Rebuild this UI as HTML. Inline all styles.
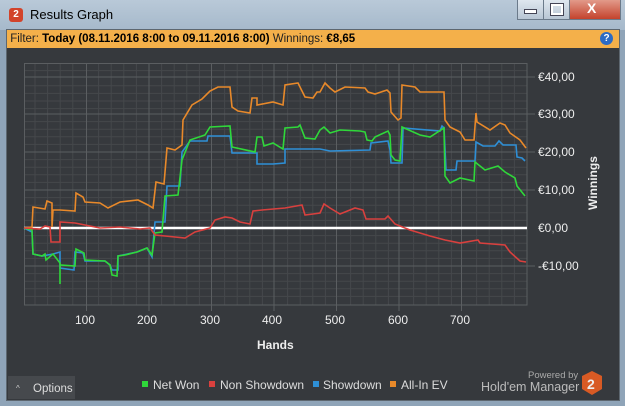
<!DOCTYPE html>
<html><head><style>
body{margin:0;width:625px;height:406px;overflow:hidden;background:#8fa4b8;font-family:"Liberation Sans",sans-serif;position:relative}
.tb{position:absolute;left:0;top:0;width:625px;height:30px;background:linear-gradient(#b9c9d8,#a6b9cb)}
.title{position:absolute;left:30px;top:7px;font-size:13px;color:#000}
.logo{position:absolute;left:9px;top:8px;width:14px;height:14px;background:#d2432a;border-radius:3px;color:#fff;font-size:10px;font-weight:bold;text-align:center;line-height:14px}
.btn{position:absolute;top:0;height:19px;border:1px solid #6b7a8a;border-top:none;background:linear-gradient(#dfe7ef,#b8c6d4)}
.main{position:absolute;left:6px;top:29px;width:612px;height:370px;background:#36393d;border:1px solid #5d6770}
.filter{position:absolute;left:0;top:0;width:612px;height:18px;background:#f4b04a;font-size:11.5px;line-height:18px;color:#222}
.filter b{color:#000}
.help{position:absolute;right:6px;top:2px;width:13px;height:13px;border-radius:50%;background:#2d6bc4;color:#fff;font-size:10px;font-weight:bold;text-align:center;line-height:13px}
</style></head><body>
<div class="tb"></div>
<div class="logo">2</div>
<div class="title">Results Graph</div>
<div class="btn" style="left:517px;width:25px"></div>
<div class="btn" style="left:543px;width:25px"></div>
<div class="btn" style="left:569px;width:50px;background:linear-gradient(#e29a8a,#c4432d)"></div>
<div style="position:absolute;left:524px;top:9px;width:11px;height:3px;background:#fff;border:1px solid #445"></div>
<div style="position:absolute;left:551px;top:4px;width:8px;height:7px;border:2px solid #fff;outline:1px solid #445"></div>
<div style="position:absolute;left:587px;top:0px;color:#fff;font-weight:bold;font-size:14px">X</div>
<div class="main">
<div class="filter">&nbsp;Filter: <b>Today (08.11.2016 8:00 to 09.11.2016 8:00)</b> Winnings: <b>€8,65</b><div class="help">?</div></div>
</div>
<svg style="position:absolute;left:0;top:0" width="625" height="406">
<g stroke="#45484b" stroke-width="1">
<path d="M24 70.6H527M24 85.8H527M24 93.4H527M24 101H527M24 108.6H527M24 121.6H527M24 129.2H527M24 136.8H527M24 144.4H527M24 159.6H527M24 167.2H527M24 174.8H527M24 182.4H527M24 197.6H527M24 205.2H527M24 212.8H527M24 220.4H527M24 235.6H527M24 243.2H527M24 250.8H527M24 258.4H527M24 273.6H527M24 281.2H527M24 288.8H527M24 296.4H527"/>
<path d="M35 63V305M47.6 63V305M60.2 63V305M72.8 63V305M98.6 63V305M111.2 63V305M123.8 63V305M136.4 63V305M161.6 63V305M174.2 63V305M186.8 63V305M199.4 63V305M224.6 63V305M237.2 63V305M249.8 63V305M262.4 63V305M287.6 63V305M300.2 63V305M312.8 63V305M325.4 63V305M350.6 63V305M363.2 63V305M375.8 63V305M388.4 63V305M413.6 63V305M426.2 63V305M438.8 63V305M451.4 63V305M476.6 63V305M489.2 63V305M501.8 63V305M514.4 63V305"/>
</g>
<g stroke="#5b5e61" stroke-width="1">
<rect x="24.5" y="63.5" width="502.5" height="241.5" fill="none"/>
<path d="M24 77H535M24 114H535M24 152H535M24 190H535M24 266H535M86.5 63V311M149 63V311M211.5 63V311M274 63V311M336.5 63V311M399 63V311M461.5 63V311"/>
</g>
<line x1="24" y1="228" x2="527" y2="228" stroke="#fff" stroke-width="2.5"/>
<g fill="none" stroke-width="1.6">
<polyline stroke="#e8892a" points="24,228 32,227 33,207 45,209 47,201 52,203 52,227 53,210 60,210 75,211 76,193 83,197 85,202 100,203 108,208 120,202 138,200 148,205 153,208 156,182 164,184 167,148 175,150 182,145 183,120 192,105 202,99 210,91 218,87 230,87 232,107 238,111 250,113 252,98 257,98 257,105 273,102 283,105 285,85 298,83 305,97 313,98 317,92 320,92 325,83 330,88 335,92 345,87 365,88 368,92 375,94 387,90 390,93 391,112 398,120 401,118 402,85 415,87 420,92 444,92 445,120 450,127 460,132 465,140 474,140 476,113 477,122 490,130 500,123 505,125 510,133 520,140 526,148"/>
<polyline stroke="#2e8fd6" points="24,228 32,232 33,254 42,256 53,254 60,252 60,268 74,270 75,252 83,253 85,261 105,261 110,265 112,270 118,270 118,256 137,252 147,248 152,257 155,222 165,222 167,186 180,186 182,152 190,141 207,141 208,136 230,136 232,153 257,153 257,164 273,164 285,163 285,149 320,149 330,151 370,150 371,143 388,141 390,150 391,163 402,163 403,128 440,131 442,126 444,128 446,170 456,170 457,161 475,161 476,142 483,146 495,146 499,141 503,145 516,145 517,157 522,158 525,161"/>
<polyline stroke="#2fd83a" points="24,228 32,230 33,254 42,256 45,254 46,260 53,254 60,263 60,284 60,265 75,266 76,249 84,253 85,260 105,261 110,265 112,275 117,276 118,256 125,255 137,252 147,248 152,255 155,233 162,232 165,196 178,195 182,160 190,140 205,135 210,127 230,126 232,147 255,152 257,137 262,137 264,146 273,143 283,149 285,128 298,127 300,125 305,138 315,139 320,130 324,127 330,133 340,130 360,131 365,132 367,140 372,141 375,137 388,131 390,135 391,155 395,160 400,161 402,127 420,135 430,137 444,128 445,176 450,183 460,178 474,181 475,162 485,170 498,166 505,172 515,178 517,186 525,196"/>
<polyline stroke="#d9403e" points="24,228 40,229 45,226 50,227 51,242 60,242 60,222 75,223 90,226 100,228 120,227 140,229 150,228 155,235 175,237 185,238 195,232 210,228 215,220 225,217 232,218 240,222 250,224 253,211 262,210 285,208 302,205 305,215 313,214 320,213 324,204 330,208 340,214 355,208 363,210 366,219 385,219 388,216 395,224 410,230 430,236 445,240 460,243 478,240 480,243 505,245 510,252 520,261 526,262"/>
</g>
<g fill="#eee" font-size="12" font-family="Liberation Sans,sans-serif">
<text x="538" y="81">€40,00</text><text x="538" y="118">€30,00</text><text x="538" y="156">€20,00</text><text x="538" y="194">€10,00</text><text x="538" y="232">€0,00</text><text x="538" y="270">-€10,00</text>
<text x="75" y="324">100</text><text x="137" y="324">200</text><text x="200" y="324">300</text><text x="262" y="324">400</text><text x="325" y="324">500</text><text x="388" y="324">600</text><text x="450" y="324">700</text>
<text x="257" y="349" font-weight="bold">Hands</text>
<text transform="translate(597,210) rotate(-90)" font-weight="bold">Winnings</text>
</g>
<rect x="8" y="376" width="67" height="23" fill="#46494d"/>
<text x="16" y="391" fill="#ccc" font-size="8" font-family="Liberation Sans">^</text>
<text x="33" y="392" fill="#ddd" font-size="11.5" font-family="Liberation Sans">Options</text>
<g font-size="12" font-family="Liberation Sans" fill="#ddd">
<rect x="142" y="381" width="6" height="6" fill="#2fd83a"/><text x="153" y="389">Net Won</text>
<rect x="209" y="381" width="6" height="6" fill="#d9403e"/><text x="220" y="389">Non Showdown</text>
<rect x="313" y="381" width="6" height="6" fill="#2e8fd6"/><text x="323" y="389">Showdown</text>
<rect x="390" y="381" width="6" height="6" fill="#e8892a"/><text x="401" y="389">All-In EV</text>
<text x="528" y="378" font-size="9.5" fill="#aaa">Powered by</text>
<text x="481" y="391" fill="#bbb" font-size="12.5">Hold'em Manager</text>
</g>
<polygon points="592,371 602,376 602,389 592,395 582,389 582,376" fill="#d85a24"/>
<text x="587" y="389" fill="#eee" font-size="14" font-weight="bold" font-family="Liberation Sans">2</text>
</svg>
</body></html>
